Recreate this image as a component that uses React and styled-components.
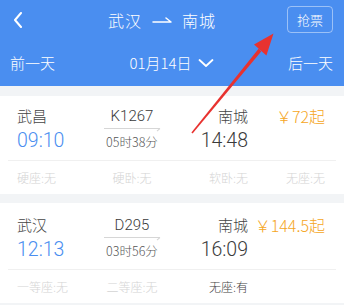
import React from "react";
import styled, { createGlobalStyle } from "styled-components";

const GlobalStyle = createGlobalStyle`
  body {
    margin: 0;
    background: #f2f4f6;
    font-family: "Noto Sans CJK SC", "Noto Sans", sans-serif;
  }
`;

const Page = styled.div`
  position: relative;
  width: 344px;
  height: 305px;
  overflow: hidden;
  background: #f2f4f6;
`;

const Header = styled.header`
  background: #4a8ef0;
  color: #ffffff;
`;

const TopBar = styled.div`
  display: grid;
  grid-template-columns: 95px auto 1fr;
  align-items: center;
  height: 40px;
  padding: 0 11px 0 13px;
`;

const BackButton = styled.div`
  display: flex;
  align-items: center;
`;

const Title = styled.div`
  display: flex;
  align-items: center;
  gap: 10px;
  font-size: 16px;
  font-weight: 300;
  line-height: 20px;
  letter-spacing: 1px;
`;

const GrabButton = styled.div`
  justify-self: end;
  width: 44px;
  height: 25px;
  border: 1px solid rgba(255, 255, 255, 0.45);
  border-radius: 4px;
  display: flex;
  align-items: center;
  justify-content: center;
  font-size: 13px;
  font-weight: 300;
  margin-top: -1px;
`;

const DateBar = styled.div`
  display: flex;
  align-items: center;
  justify-content: space-between;
  height: 46px;
  padding: 0 11px 0 10px;
  font-size: 15px;
  font-weight: 300;
  line-height: 20px;
`;

const DatePicker = styled.div`
  display: flex;
  align-items: center;
  gap: 6px;
`;

const List = styled.div`
  display: flex;
  flex-direction: column;
  gap: 9px;
  padding-top: 10px;
`;

const Card = styled.div`
  background: #ffffff;
  padding: ${(p) => p.$top}px 8px 0;
`;

const Grid = styled.div`
  display: grid;
  grid-template-columns: 80px 70px 81px 1fr;
  padding: 0 11px 0 9px;
`;

const TopRow = styled(Grid)`
  padding-bottom: 6px;
  border-bottom: 1px solid #f0f0f0;
`;

const Cell = styled.div`
  display: flex;
  flex-direction: column;
  align-items: ${(p) => p.$align || "flex-start"};
`;

const Station = styled.div`
  font-size: 15px;
  font-weight: 300;
  line-height: 20px;
  color: #444444;
`;

const Time = styled.div`
  font-size: 19.5px;
  font-weight: 300;
  line-height: 26px;
  margin-top: 2px;
  color: ${(p) => (p.$accent ? "#4a8ef0" : "#3a3a3a")};
  font-family: Roboto, "Noto Sans", sans-serif;
`;

const TrainNo = styled.div`
  position: relative;
  font-size: 15px;
  font-weight: 300;
  line-height: 20px;
  color: #3a3a3a;
  width: 56px;
  text-align: center;
  padding-bottom: 2px;
  border-bottom: 1px solid #d6d6d6;
  font-family: Roboto, "Noto Sans", sans-serif;

  &::after {
    content: "";
    position: absolute;
    right: 0;
    bottom: -1px;
    width: 4px;
    height: 1px;
    background: #d6d6d6;
    transform: rotate(-40deg);
    transform-origin: right center;
  }
`;

const Duration = styled.div`
  font-size: 12.5px;
  font-weight: 300;
  line-height: 18px;
  margin-top: 4px;
  color: #555555;
`;

const Price = styled.div`
  font-size: 16px;
  font-weight: 300;
  line-height: 20px;
  color: #f5a623;
  white-space: nowrap;
`;

const SeatRow = styled(Grid)`
  height: 33px;
  align-items: center;
`;

const Seat = styled.div`
  font-size: 12px;
  font-weight: 300;
  color: ${(p) => (p.$has ? "#444444" : "#d4d4d4")};
  justify-self: ${(p) => p.$align || "start"};
  white-space: nowrap;
`;

const Overlay = styled.svg`
  position: absolute;
  left: 0;
  top: 0;
  pointer-events: none;
`;

const trains = [
  {
    from: "武昌",
    to: "南城",
    no: "K1267",
    dep: "09:10",
    arr: "14:48",
    dur: "05时38分",
    price: "￥72起",
    top: 10,
    seats: [
      ["硬座:无", false],
      ["硬卧:无", false],
      ["软卧:无", false],
      ["无座:无", false],
    ],
  },
  {
    from: "武汉",
    to: "南城",
    no: "D295",
    dep: "12:13",
    arr: "16:09",
    dur: "03时56分",
    price: "￥144.5起",
    top: 12,
    seats: [
      ["一等座:无", false],
      ["二等座:无", false],
      ["无座:有", true],
    ],
  },
];

const seatAlign = ["start", "center", "end", "end"];

const App = () => {
  return (
    <Page>
      <GlobalStyle />
      <Header>
        <TopBar>
          <BackButton>
            <svg width="10" height="16" viewBox="0 0 10 16">
              <path d="M8 1 L2 8 L8 15" fill="none" stroke="#fff" strokeWidth="2" strokeLinecap="round" strokeLinejoin="round" />
            </svg>
          </BackButton>
          <Title>
            <span>武汉</span>
            <svg width="20" height="8" viewBox="0 0 20 8">
              <path d="M1 6 H19 L14 2" fill="none" stroke="#fff" strokeWidth="1.5" strokeLinecap="round" strokeLinejoin="round" />
            </svg>
            <span>南城</span>
          </Title>
          <GrabButton>抢票</GrabButton>
        </TopBar>
        <DateBar>
          <span>前一天</span>
          <DatePicker>
            <span>01月14日</span>
            <svg width="16" height="10" viewBox="0 0 16 10">
              <path d="M1.5 2 L8 8 L14.5 2" fill="none" stroke="#fff" strokeWidth="1.8" strokeLinecap="round" strokeLinejoin="round" />
            </svg>
          </DatePicker>
          <span>后一天</span>
        </DateBar>
      </Header>
      <List>
        {trains.map((t) => (
          <Card key={t.no} $top={t.top}>
            <TopRow>
              <Cell>
                <Station>{t.from}</Station>
                <Time $accent>{t.dep}</Time>
              </Cell>
              <Cell $align="center">
                <TrainNo>{t.no}</TrainNo>
                <Duration>{t.dur}</Duration>
              </Cell>
              <Cell $align="flex-end">
                <Station>{t.to}</Station>
                <Time>{t.arr}</Time>
              </Cell>
              <Cell $align="flex-end">
                <Price>{t.price}</Price>
              </Cell>
            </TopRow>
            <SeatRow>
              {t.seats.map(([label, has], i) => (
                <Seat key={label} $has={has} $align={seatAlign[i]}>
                  {label}
                </Seat>
              ))}
            </SeatRow>
          </Card>
        ))}
      </List>
      <Overlay width="344" height="305" viewBox="0 0 344 305">
        <polygon points="191.4,132.4 192.6,133.6 261.2,51.4 258.8,48.6" fill="#e8322f" />
        <polygon points="273.5,33.5 254,44.6 266.4,55.4" fill="#e8322f" />
      </Overlay>
    </Page>
  );
};

export default App;
